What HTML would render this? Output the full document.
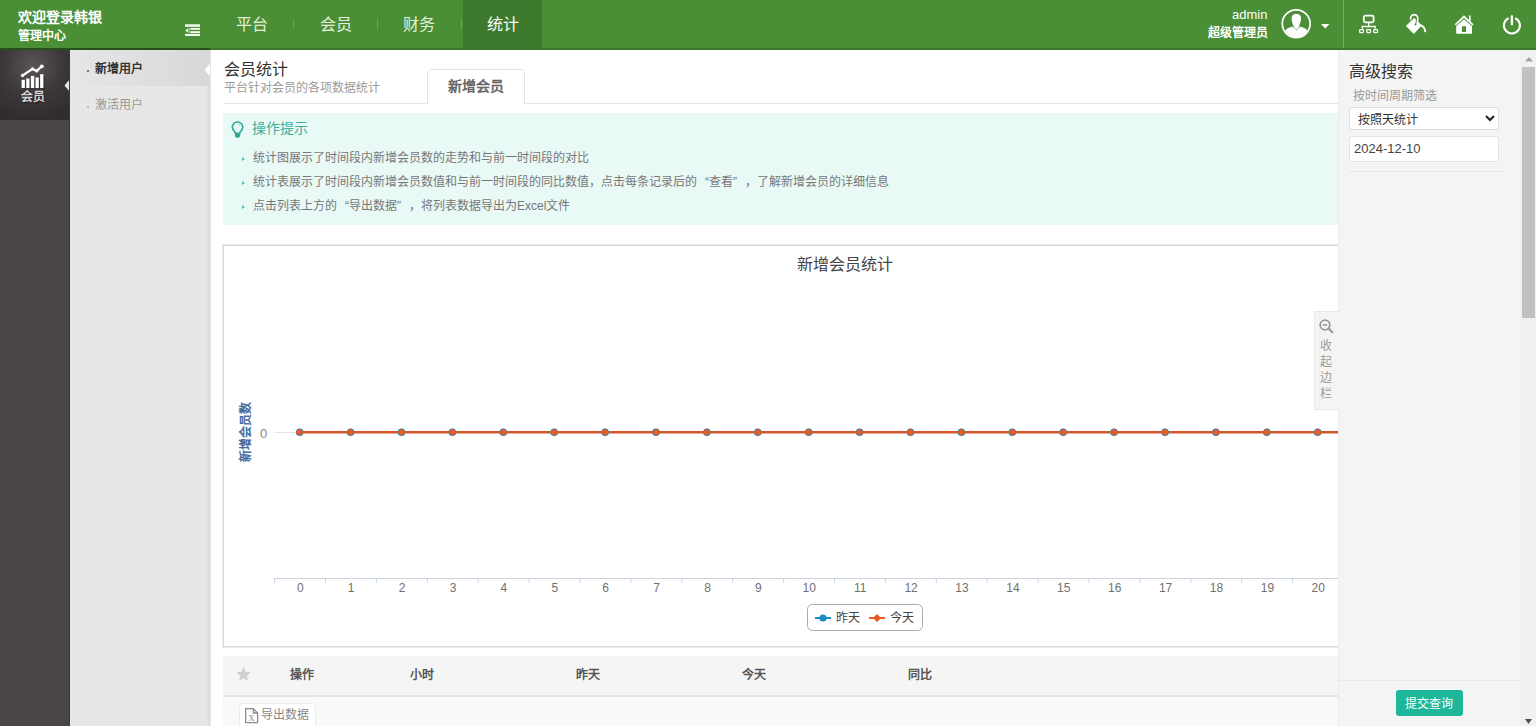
<!DOCTYPE html>
<html lang="zh-CN"><head><meta charset="utf-8">
<style>
*{margin:0;padding:0;box-sizing:border-box}
html,body{width:1536px;height:726px;overflow:hidden;background:#fff;font-family:"Liberation Sans",sans-serif;position:relative}
.a{position:absolute}
.t{position:absolute;white-space:nowrap;line-height:1}
svg{position:absolute;overflow:visible}
</style></head><body>
<!-- header -->
<div class="a" style="left:0;top:0;width:1536px;height:48px;background:#4a8f36"></div>
<div class="a" style="left:0;top:48px;width:1536px;height:2px;background:#3d782d"></div>
<div class="a" style="left:0;top:48px;width:210px;height:2px;background:#23501b"></div>
<div class="t" style="left:18px;top:10px;font-size:14px;font-weight:bold;color:#fff">欢迎登录韩银</div>
<div class="t" style="left:18px;top:30px;font-size:12px;font-weight:bold;color:#fff">管理中心</div>
<svg style="left:185px;top:24px" width="15" height="12" viewBox="0 0 15 12"><g fill="#f4fbef"><rect x="0" y="0.3" width="15" height="2.5"/><rect x="5.3" y="3.9" width="9.7" height="1.9"/><rect x="5.3" y="7.2" width="9.7" height="1.9"/><rect x="0" y="9.9" width="15" height="2.1"/><path d="M0.2 6.4 L3.3 4 L3.3 8.8Z"/><rect x="3.9" y="3.9" width="0.8" height="5.2" opacity=".6"/></g></svg>
<div class="a" style="left:463px;top:0;width:79px;height:48px;background:#3d7a2e"></div>
<div class="t" style="left:236px;top:17px;font-size:16px;color:#e6efdf">平台</div>
<div class="a" style="left:293px;top:19px;width:1px;height:10px;background:#6aa55a"></div>
<div class="t" style="left:320px;top:17px;font-size:16px;color:#e6efdf">会员</div>
<div class="a" style="left:377px;top:19px;width:1px;height:10px;background:#6aa55a"></div>
<div class="t" style="left:403px;top:17px;font-size:16px;color:#e6efdf">财务</div>
<div class="a" style="left:461px;top:19px;width:1px;height:10px;background:#6aa55a"></div>
<div class="t" style="left:487px;top:17px;font-size:16px;color:#fff">统计</div>
<div class="t" style="left:1232px;top:8px;font-size:13px;color:#fff">admin</div>
<div class="t" style="left:1208px;top:27px;font-size:12px;font-weight:bold;color:#fff">超级管理员</div>
<svg style="left:1281px;top:8px" width="31" height="31" viewBox="0 0 31 31"><defs><clipPath id="cc"><circle cx="15.2" cy="15.7" r="13.4"/></clipPath></defs><g clip-path="url(#cc)" fill="#fff"><path d="M4 23 Q6.5 19.6 11.8 18.6 L15.3 22.6 L18.8 18.6 Q24.1 19.6 26.6 23 L31 32 L-1 32Z"/><path d="M10.6 9.8 C10.6 4.3 20 4.3 20 9.8 C20 13.5 18.8 16.6 17.9 18.6 L17.9 21.5 L12.7 21.5 L12.7 18.6 C11.8 16.6 10.6 13.5 10.6 9.8Z"/></g><path d="M12.2 18.9 L13.9 20.6 M18.4 18.9 L16.7 20.6" stroke="#4a8f36" stroke-width=".8"/><circle cx="15.2" cy="15.7" r="13.9" fill="none" stroke="#fff" stroke-width="1.7"/></svg>
<svg style="left:1321px;top:24px" width="9" height="5" viewBox="0 0 9 5"><path d="M0 0H8.5L4.25 4.5Z" fill="#fff"/></svg>
<div class="a" style="left:1343px;top:0;width:1px;height:48px;background:#78ad68"></div>
<svg style="left:1352px;top:8px" width="80" height="32" viewBox="0 0 80 32" fill="none" stroke="#fff">
<rect x="11.8" y="7.7" width="9.8" height="6.6" rx="1.5" stroke-width="1.8"/>
<path d="M16.7 14.5V18.5 M10.2 20.8V18.5H23.2V20.8" stroke-width="1.3"/>
<rect x="7.7" y="21.7" width="3.7" height="2.9" rx=".5" stroke-width="1.3"/>
<rect x="14.8" y="21.7" width="3.7" height="2.9" rx=".5" stroke-width="1.3"/>
<rect x="21.8" y="21.7" width="3.7" height="2.9" rx=".5" stroke-width="1.3"/>
<path d="M54.3 18 L62.2 10.3 L69.4 17.3 L61.8 25.6Z" fill="#fff" stroke="#fff" stroke-width=".8" stroke-linejoin="round"/>
<path d="M64.6 10.3 L64.1 15.3 Q63.9 16.4 63.1 16.5" stroke="#4a8f36" stroke-width="1.1" stroke-linecap="round"/><circle cx="63.4" cy="16.4" r="0.9" fill="#4a8f36" stroke="none"/>
<path d="M58.5 11.2 Q58.6 6.7 62.3 6.6 Q65.9 6.8 65.8 10.8 L65.4 15.4" stroke-width="1.6" stroke-linecap="round"/>
<path d="M69.2 17.4 Q72.8 19.2 73.2 23.3" stroke-width="1.9" stroke-linecap="round"/>
</svg>
<svg style="left:1446px;top:8px" width="80" height="32" viewBox="0 0 80 32">
<path d="M9.3 16.9 L18 8.6 L26.9 16.9" fill="none" stroke="#fff" stroke-width="1.8"/>
<rect x="23" y="7.5" width="1.6" height="6" fill="#fff"/>
<path d="M10.2 18.3 L18 11.3 L26 18.3 V25 Q26 25.8 25.2 25.8 H11 Q10.2 25.8 10.2 25 Z M15.9 24 V18.3 H20 V24Z" fill="#fff" fill-rule="evenodd"/>
<path d="M62.6 10.2 A8 8 0 1 0 69.2 10.2" fill="none" stroke="#fff" stroke-width="2.1"/>
<rect x="64.7" y="7.3" width="2.4" height="9.9" rx="1" fill="#fff"/>
</svg>

<!-- left sidebar -->
<div class="a" style="left:0;top:50px;width:70px;height:676px;background:#4a4647"></div>
<div class="a" style="left:0;top:50px;width:70px;height:70px;background:radial-gradient(ellipse 55px 55px at 33px 16px,#5a5556 0,#3c3738 55%,#312d2e 100%)"></div>
<svg style="left:15px;top:58px" width="40" height="48" viewBox="0 0 40 48">
<g fill="#222" opacity=".35" transform="translate(2,2)"><rect x="6.6" y="21.8" width="3.3" height="8.2"/><rect x="11.2" y="20.5" width="3.3" height="9.5"/><rect x="15.9" y="17.9" width="3.3" height="12.1"/><rect x="20.5" y="19.5" width="3.3" height="10.5"/><rect x="25.1" y="16.2" width="3.3" height="13.8"/></g>
<g fill="#fff"><rect x="6.6" y="21.8" width="3.3" height="8.2"/><rect x="11.2" y="20.5" width="3.3" height="9.5"/><rect x="15.9" y="17.9" width="3.3" height="12.1"/><rect x="20.5" y="19.5" width="3.3" height="10.5"/><rect x="25.1" y="16.2" width="3.3" height="13.8"/></g>
<path d="M7.6 17.5 L17.5 10.9 L21.8 12.9 L26.8 8.3" fill="none" stroke="#fff" stroke-width="2.2" stroke-linejoin="round" stroke-linecap="round"/>
<circle cx="7.6" cy="17.5" r="1.7" fill="#fff"/><circle cx="17.5" cy="10.9" r="1.6" fill="#fff"/><circle cx="21.8" cy="12.9" r="1.6" fill="#fff"/><circle cx="26.8" cy="8.3" r="1.9" fill="#fff"/>
</svg>
<div class="t" style="left:21px;top:91px;font-size:12px;font-weight:bold;color:#d6d6d6;text-shadow:1px 1px 1px rgba(0,0,0,.5)">会员</div>
<svg style="left:64px;top:79px" width="7" height="13" viewBox="0 0 7 13"><path d="M6 0 L0.5 6.5 L6 13Z" fill="#e6e6e6"/></svg>

<!-- submenu -->
<div class="a" style="left:70px;top:50px;width:140px;height:676px;background:#e8e7e7"></div>
<div class="a" style="left:69px;top:50px;width:1px;height:676px;background:#3c3839"></div>
<div class="a" style="left:206px;top:50px;width:4px;height:676px;background:linear-gradient(to right,rgba(0,0,0,0),rgba(0,0,0,.05))"></div>
<div class="a" style="left:70px;top:50px;width:140px;height:36px;background:linear-gradient(to right,#e6e6e6,#d8d8d8)"></div>
<div class="a" style="left:87px;top:70px;width:2px;height:2px;background:#777"></div>
<div class="t" style="left:95px;top:63px;font-size:12px;font-weight:bold;color:#333">新增用户</div>
<div class="a" style="left:87px;top:106px;width:2px;height:2px;background:#bbb"></div>
<div class="t" style="left:95px;top:99px;font-size:12px;color:#999">激活用户</div>
<svg style="left:204px;top:63px" width="7" height="14" viewBox="0 0 7 14"><path d="M6.5 0 L0.5 7 L6.5 14Z" fill="#fff"/></svg>

<!-- main -->
<div class="a" style="left:210px;top:50px;width:1px;height:676px;background:#e6e6e6"></div>
<div class="t" style="left:224px;top:62px;font-size:16px;color:#333">会员统计</div>
<div class="t" style="left:224px;top:82px;font-size:12px;color:#9a9a9a">平台针对会员的各项数据统计</div>
<div class="a" style="left:223px;top:103px;width:1115px;height:1px;background:#e6e6e6"></div>
<div class="a" style="left:427px;top:69px;width:98px;height:35px;background:#fff;border:1px solid #e4e4e4;border-bottom:none;border-radius:5px 5px 0 0"></div>
<div class="t" style="left:448px;top:79px;font-size:14px;font-weight:bold;color:#666">新增会员</div>

<div class="a" style="left:223px;top:113px;width:1115px;height:112px;background:#e9f9f6"></div>
<svg style="left:226px;top:115px" width="20" height="26" viewBox="0 0 20 26">
<path d="M9.2 18.2 L8.6 16.3 Q6.3 14.6 6.3 12.2 A5.25 5.25 0 0 1 16.8 12.2 Q16.8 14.6 14.5 16.3 L13.9 18.2Z" fill="none" stroke="#2eaa94" stroke-width="1.6" stroke-linejoin="round"/>
<path d="M8.9 18.6 H14.2 V21.6 Q11.55 24.2 8.9 21.6Z" fill="#2eaa94"/>
<path d="M12.3 9.2 Q13.8 9.7 14.3 11" fill="none" stroke="#2eaa94" stroke-width=".8" opacity=".7"/>
</svg>
<div class="t" style="left:252px;top:121px;font-size:14px;color:#3ab19d">操作提示</div>
<svg style="left:242px;top:157px" width="4" height="53" viewBox="0 0 4 53" fill="#5cc3b0"><path d="M0 0 L3 2 L0 4Z M0 24 L3 26 L0 28Z M0 48 L3 50 L0 52Z"/></svg>
<div class="t" style="left:253px;top:152px;font-size:12px;color:#777">统计图展示了时间段内新增会员数的走势和与前一时间段的对比</div>
<div class="t" style="left:253px;top:176px;font-size:12px;color:#777">统计表展示了时间段内新增会员数值和与前一时间段的同比数值，点击每条记录后的<span style="display:inline-block;width:12px;text-align:right">“</span>查看<span style="display:inline-block;width:12px;text-align:left">”</span>，了解新增会员的详细信息</div>
<div class="t" style="left:253px;top:200px;font-size:12px;color:#777">点击列表上方的<span style="display:inline-block;width:12px;text-align:right">“</span>导出数据<span style="display:inline-block;width:12px;text-align:left">”</span>，将列表数据导出为Excel文件</div>

<!-- chart -->
<div class="a" style="left:222px;top:244px;width:1200px;height:404px;border:1px solid #ececec"></div>
<div class="a" style="left:223px;top:245px;width:1200px;height:402px;border:1px solid #d9d9d9;background:#fff"></div>
<div class="t" style="left:797px;top:257px;font-size:16px;color:#444">新增会员统计</div>
<div class="t" style="left:216px;top:426px;font-size:12px;font-weight:bold;color:#4a6a9b;transform:rotate(-90deg);transform-origin:30px 6px;width:60px;text-align:center">新增会员数</div>
<svg style="left:0;top:0" width="1536" height="726" viewBox="0 0 1536 726">
<text x="263.5" y="437.5" font-size="13" fill="#888" text-anchor="middle" font-family="Liberation Sans">0</text>
<path d="M275 432.5H1338" stroke="#e3e3e3" stroke-width="1"/>
<path d="M299.8 432.3H1338" stroke="#d2582c" stroke-width="2.6"/>
<circle cx="299.7" cy="432.3" r="3.8" fill="#1b8bc4"/><path d="M295.7 432.3 L299.7 428.3 L303.7 432.3 L299.7 436.3Z" fill="#e95b25"/>
<circle cx="350.6" cy="432.3" r="3.8" fill="#1b8bc4"/><path d="M346.6 432.3 L350.6 428.3 L354.6 432.3 L350.6 436.3Z" fill="#e95b25"/>
<circle cx="401.5" cy="432.3" r="3.8" fill="#1b8bc4"/><path d="M397.5 432.3 L401.5 428.3 L405.5 432.3 L401.5 436.3Z" fill="#e95b25"/>
<circle cx="452.4" cy="432.3" r="3.8" fill="#1b8bc4"/><path d="M448.4 432.3 L452.4 428.3 L456.4 432.3 L452.4 436.3Z" fill="#e95b25"/>
<circle cx="503.3" cy="432.3" r="3.8" fill="#1b8bc4"/><path d="M499.3 432.3 L503.3 428.3 L507.3 432.3 L503.3 436.3Z" fill="#e95b25"/>
<circle cx="554.2" cy="432.3" r="3.8" fill="#1b8bc4"/><path d="M550.2 432.3 L554.2 428.3 L558.2 432.3 L554.2 436.3Z" fill="#e95b25"/>
<circle cx="605.1" cy="432.3" r="3.8" fill="#1b8bc4"/><path d="M601.1 432.3 L605.1 428.3 L609.1 432.3 L605.1 436.3Z" fill="#e95b25"/>
<circle cx="656.0" cy="432.3" r="3.8" fill="#1b8bc4"/><path d="M652.0 432.3 L656.0 428.3 L660.0 432.3 L656.0 436.3Z" fill="#e95b25"/>
<circle cx="706.9" cy="432.3" r="3.8" fill="#1b8bc4"/><path d="M702.9 432.3 L706.9 428.3 L710.9 432.3 L706.9 436.3Z" fill="#e95b25"/>
<circle cx="757.8" cy="432.3" r="3.8" fill="#1b8bc4"/><path d="M753.8 432.3 L757.8 428.3 L761.8 432.3 L757.8 436.3Z" fill="#e95b25"/>
<circle cx="808.7" cy="432.3" r="3.8" fill="#1b8bc4"/><path d="M804.7 432.3 L808.7 428.3 L812.7 432.3 L808.7 436.3Z" fill="#e95b25"/>
<circle cx="859.6" cy="432.3" r="3.8" fill="#1b8bc4"/><path d="M855.6 432.3 L859.6 428.3 L863.6 432.3 L859.6 436.3Z" fill="#e95b25"/>
<circle cx="910.5" cy="432.3" r="3.8" fill="#1b8bc4"/><path d="M906.5 432.3 L910.5 428.3 L914.5 432.3 L910.5 436.3Z" fill="#e95b25"/>
<circle cx="961.4" cy="432.3" r="3.8" fill="#1b8bc4"/><path d="M957.4 432.3 L961.4 428.3 L965.4 432.3 L961.4 436.3Z" fill="#e95b25"/>
<circle cx="1012.3" cy="432.3" r="3.8" fill="#1b8bc4"/><path d="M1008.3 432.3 L1012.3 428.3 L1016.3 432.3 L1012.3 436.3Z" fill="#e95b25"/>
<circle cx="1063.2" cy="432.3" r="3.8" fill="#1b8bc4"/><path d="M1059.2 432.3 L1063.2 428.3 L1067.2 432.3 L1063.2 436.3Z" fill="#e95b25"/>
<circle cx="1114.1" cy="432.3" r="3.8" fill="#1b8bc4"/><path d="M1110.1 432.3 L1114.1 428.3 L1118.1 432.3 L1114.1 436.3Z" fill="#e95b25"/>
<circle cx="1165.0" cy="432.3" r="3.8" fill="#1b8bc4"/><path d="M1161.0 432.3 L1165.0 428.3 L1169.0 432.3 L1165.0 436.3Z" fill="#e95b25"/>
<circle cx="1215.9" cy="432.3" r="3.8" fill="#1b8bc4"/><path d="M1211.9 432.3 L1215.9 428.3 L1219.9 432.3 L1215.9 436.3Z" fill="#e95b25"/>
<circle cx="1266.8" cy="432.3" r="3.8" fill="#1b8bc4"/><path d="M1262.8 432.3 L1266.8 428.3 L1270.8 432.3 L1266.8 436.3Z" fill="#e95b25"/>
<circle cx="1317.7" cy="432.3" r="3.8" fill="#1b8bc4"/><path d="M1313.7 432.3 L1317.7 428.3 L1321.7 432.3 L1317.7 436.3Z" fill="#e95b25"/>
<circle cx="1368.6" cy="432.3" r="3.8" fill="#1b8bc4"/><path d="M1364.6 432.3 L1368.6 428.3 L1372.6 432.3 L1368.6 436.3Z" fill="#e95b25"/>
<path d="M274 578.5H1338" stroke="#c9d4e0" stroke-width="1"/>
<path d="M274.6 578V583 M325.5 578V583 M376.4 578V583 M427.3 578V583 M478.2 578V583 M529.1 578V583 M580.0 578V583 M630.9 578V583 M681.8 578V583 M732.7 578V583 M783.6 578V583 M834.5 578V583 M885.4 578V583 M936.3 578V583 M987.2 578V583 M1038.1 578V583 M1089.0 578V583 M1139.9 578V583 M1190.8 578V583 M1241.7 578V583 M1292.6 578V583 M1343.5 578V583 M1394.4 578V583" stroke="#c9d4e0" stroke-width="1"/>
<g font-size="12" fill="#707070" text-anchor="middle" font-family="Liberation Sans">
<text x="300.3" y="592.3">0</text>
<text x="351.2" y="592.3">1</text>
<text x="402.1" y="592.3">2</text>
<text x="453.0" y="592.3">3</text>
<text x="503.9" y="592.3">4</text>
<text x="554.8" y="592.3">5</text>
<text x="605.7" y="592.3">6</text>
<text x="656.6" y="592.3">7</text>
<text x="707.5" y="592.3">8</text>
<text x="758.4" y="592.3">9</text>
<text x="809.3" y="592.3">10</text>
<text x="860.2" y="592.3">11</text>
<text x="911.1" y="592.3">12</text>
<text x="962.0" y="592.3">13</text>
<text x="1012.9" y="592.3">14</text>
<text x="1063.8" y="592.3">15</text>
<text x="1114.7" y="592.3">16</text>
<text x="1165.6" y="592.3">17</text>
<text x="1216.5" y="592.3">18</text>
<text x="1267.4" y="592.3">19</text>
<text x="1318.3" y="592.3">20</text>
</g>
<rect x="807.5" y="604.5" width="115" height="26" rx="5" fill="#fff" stroke="#aaa" stroke-width="1"/>
<path d="M815 618H831" stroke="#1b8bc4" stroke-width="2"/><circle cx="823" cy="618" r="3.6" fill="#1b8bc4"/>
<path d="M869 618H885" stroke="#e95b25" stroke-width="2"/><path d="M877 614 L881 618 L877 622 L873 618Z" fill="#e95b25"/>
</svg>
<div class="t" style="left:836px;top:612px;font-size:12px;color:#444">昨天</div>
<div class="t" style="left:890px;top:612px;font-size:12px;color:#444">今天</div>

<!-- table -->
<div class="a" style="left:223px;top:656px;width:1115px;height:39px;background:#f5f5f5"></div>
<div class="a" style="left:223px;top:695px;width:1115px;height:2px;background:#e4e4e4"></div>
<div class="a" style="left:223px;top:697px;width:1115px;height:29px;background:#f9f9f9"></div>
<svg style="left:236px;top:667px" width="15" height="14" viewBox="0 0 24 23"><path d="M12 0 L15.5 7.6 L24 8.5 L17.6 14.2 L19.4 22.6 L12 18.3 L4.6 22.6 L6.4 14.2 L0 8.5 L8.5 7.6Z" fill="#cfcfcf"/></svg>
<div class="t" style="left:290px;top:669px;font-size:12px;font-weight:bold;color:#555">操作</div>
<div class="t" style="left:410px;top:669px;font-size:12px;font-weight:bold;color:#555">小时</div>
<div class="t" style="left:576px;top:669px;font-size:12px;font-weight:bold;color:#555">昨天</div>
<div class="t" style="left:742px;top:669px;font-size:12px;font-weight:bold;color:#555">今天</div>
<div class="t" style="left:908px;top:669px;font-size:12px;font-weight:bold;color:#555">同比</div>
<div class="a" style="left:239px;top:703px;width:77px;height:30px;background:#fff;border:1px solid #ececec;border-radius:4px"></div>
<svg style="left:245px;top:707.5px" width="14" height="16" viewBox="0 0 14 16"><path d="M.7 .7H8.3L12.6 5V14.6H.7Z M8.3 .7V5H12.6" fill="none" stroke="#8c8c8c" stroke-width="1.3" stroke-linejoin="round"/><text x="6.5" y="12.9" font-size="8.2" fill="#808080" text-anchor="middle" font-family="Liberation Serif">X</text></svg>
<div class="t" style="left:261px;top:709px;font-size:12px;color:#888">导出数据</div>

<!-- right panel -->
<div class="a" style="left:1338px;top:50px;width:182px;height:676px;background:#f4f4f4;border-left:1px solid #ececec"></div>
<div class="t" style="left:1349px;top:64px;font-size:16px;color:#333">高级搜索</div>
<div class="t" style="left:1353px;top:90px;font-size:12px;color:#999">按时间周期筛选</div>
<div class="a" style="left:1349px;top:107px;width:150px;height:23px;background:#fff;border:1px solid #ddd;border-radius:3px"></div>
<div class="t" style="left:1358px;top:114px;font-size:12px;color:#333">按照天统计</div>
<svg style="left:1485px;top:115px" width="10" height="7" viewBox="0 0 10 7"><path d="M1 1 L5 5 L9 1" fill="none" stroke="#222" stroke-width="2"/></svg>
<div class="a" style="left:1349px;top:136px;width:150px;height:26px;background:#fff;border:1px solid #e3e3e3;border-radius:3px"></div>
<div class="t" style="left:1354px;top:142px;font-size:13px;color:#444">2024-12-10</div>
<div class="a" style="left:1349px;top:171px;width:155px;height:1px;background:#e6e6e6"></div>
<div class="a" style="left:1338px;top:680px;width:182px;height:1px;background:#e8e8e8"></div>
<div class="a" style="left:1396px;top:690px;width:67px;height:26px;background:#1eb79a;border-radius:3px"></div>
<div class="t" style="left:1405px;top:698px;font-size:12px;color:#fff">提交查询</div>
<!-- collapse tab -->
<div class="a" style="left:1314px;top:311px;width:25px;height:99px;background:#f4f4f4;border:1px solid #e8e8e8;border-right:none"></div>
<svg style="left:1319px;top:319px" width="15" height="15" viewBox="0 0 15 15"><circle cx="6" cy="6" r="4.8" fill="none" stroke="#999" stroke-width="1.8"/><path d="M3.8 6H8.2" stroke="#999" stroke-width="1.6"/><path d="M9.5 9.5L13.3 13.3" stroke="#999" stroke-width="2.2" stroke-linecap="round"/></svg>
<div class="t" style="left:1320px;top:338px;font-size:12px;color:#999;line-height:16px;width:13px;white-space:normal">收起边栏</div>

<!-- scrollbar -->
<div class="a" style="left:1520px;top:50px;width:16px;height:676px;background:#f1f1f1"></div>
<div class="a" style="left:1522px;top:67px;width:13px;height:251px;background:#c1c1c1"></div>
<svg style="left:1525px;top:57px" width="8" height="5" viewBox="0 0 8 5"><path d="M0 4.5 L4 0 L8 4.5Z" fill="#a3a3a3"/></svg>
<svg style="left:1525px;top:719px" width="7" height="5" viewBox="0 0 7 5"><path d="M0 0 L3.5 5 L7 0Z" fill="#505050"/></svg>
</body></html>
